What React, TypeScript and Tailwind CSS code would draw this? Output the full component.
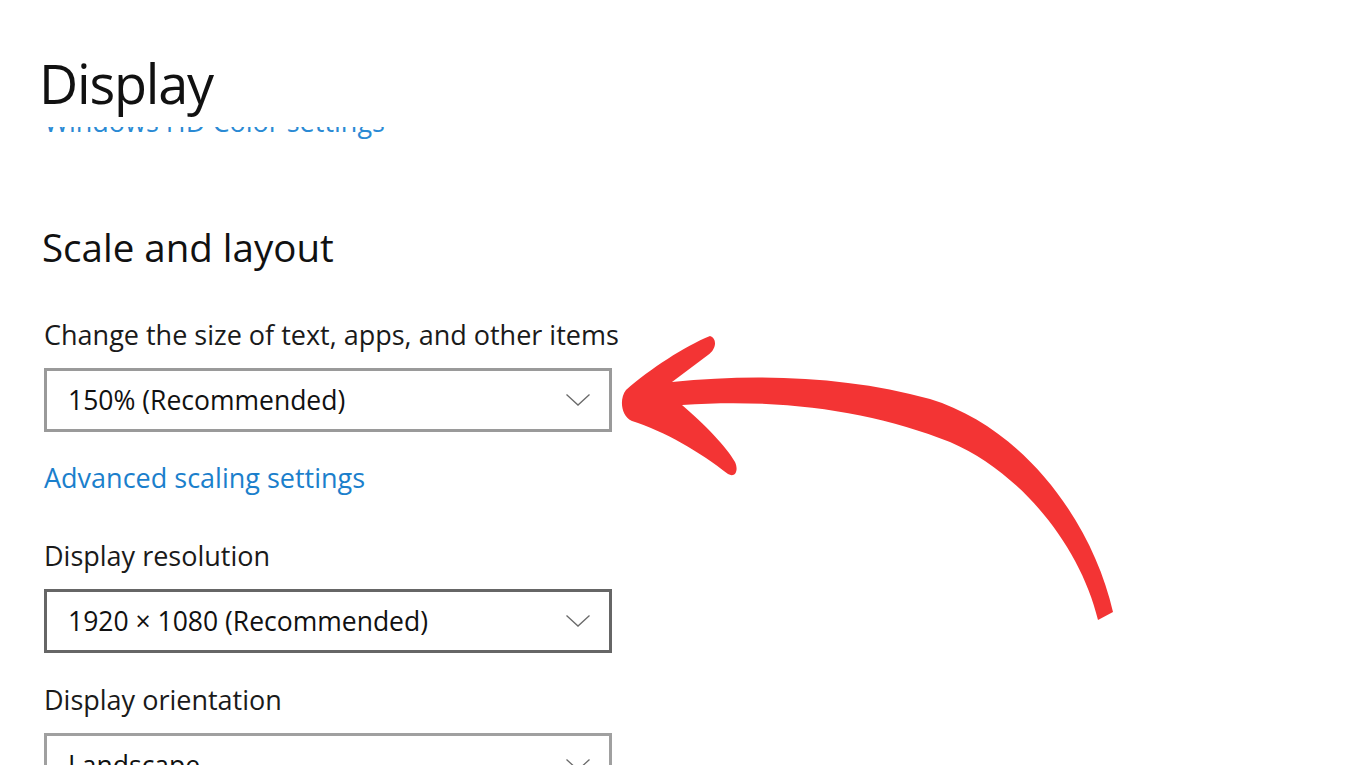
import React from 'react';

function Chevron() {
  return (
    <svg width="26" height="14" viewBox="0 0 26 14" className="shrink-0">
      <path d="M1.5 1.5 L13 12 L24.5 1.5" fill="none" stroke="#6a6a6a" strokeWidth="1.3" />
    </svg>
  );
}

function Dropdown({ label, border }: { label: string; border: string }) {
  return (
    <div className={`flex h-[64px] w-[568px] items-center justify-between border-[3px] bg-white pl-[21px] pr-[18px] ${border}`}>
      <span className="text-[26.5px] leading-none text-[#111]">{label}</span>
      <Chevron />
    </div>
  );
}

function RedArrow() {
  return (
    <svg className="pointer-events-none absolute left-0 top-0" width="1360" height="765" viewBox="0 0 1360 765">
      <path
        d="M710 336
           C717 338 717 349 708 355
           L672 382
           C760 373 850 377 930 399
           C1022 427 1092 520 1113 612
           L1098 620
           C1080 545 1020 472 950 442
           C872 411 780 398 682 405
           C705 425 726 446 735 462
           C739 471 735 478 728 474
           C700 452 664 431 632 421
           C621 416 619 399 626 390
           C650 369 685 346 710 336 Z"
        fill="#f33434"
      />
    </svg>
  );
}

export default function App() {
  return (
    <div className="relative h-[765px] w-[1360px] overflow-hidden bg-white" style={{ fontFamily: '"Open Sans", "Noto Sans", sans-serif' }}>
      <div className="flex flex-col pl-[44px]">
        <h1 className="-ml-[5px] mt-[48px] h-[70px] text-[54px] font-normal leading-[70px] tracking-[-1.2px] text-[#111]">Display</h1>
        <div className="mt-[9px] h-[12px] overflow-hidden">
          <div className="-mt-[22px] text-[27px] leading-[34px] text-[#2a8ad4]">Windows HD Color settings</div>
        </div>
        <h2 className="-ml-[2px] mt-[83px] text-[38.5px] font-normal leading-[50px] text-[#111]">Scale and layout</h2>
        <div className="mt-[43px] text-[27px] leading-[40px] text-[#1a1a1a]">Change the size of text, apps, and other items</div>
        <div className="mt-[13px]">
          <Dropdown label="150% (Recommended)" border="border-[#9a9a9a]" />
        </div>
        <div className="mt-[29px] text-[27px] leading-[34px] text-[#1b7fcc]">Advanced scaling settings</div>
        <div className="mt-[44px] text-[27px] leading-[34px] text-[#1a1a1a]">Display resolution</div>
        <div className="mt-[16px]">
          <Dropdown label="1920 × 1080 (Recommended)" border="border-[#666666]" />
        </div>
        <div className="mt-[30px] text-[27px] leading-[34px] text-[#1a1a1a]">Display orientation</div>
        <div className="mt-[16px]">
          <Dropdown label="Landscape" border="border-[#a0a0a0]" />
        </div>
      </div>
      <RedArrow />
    </div>
  );
}
